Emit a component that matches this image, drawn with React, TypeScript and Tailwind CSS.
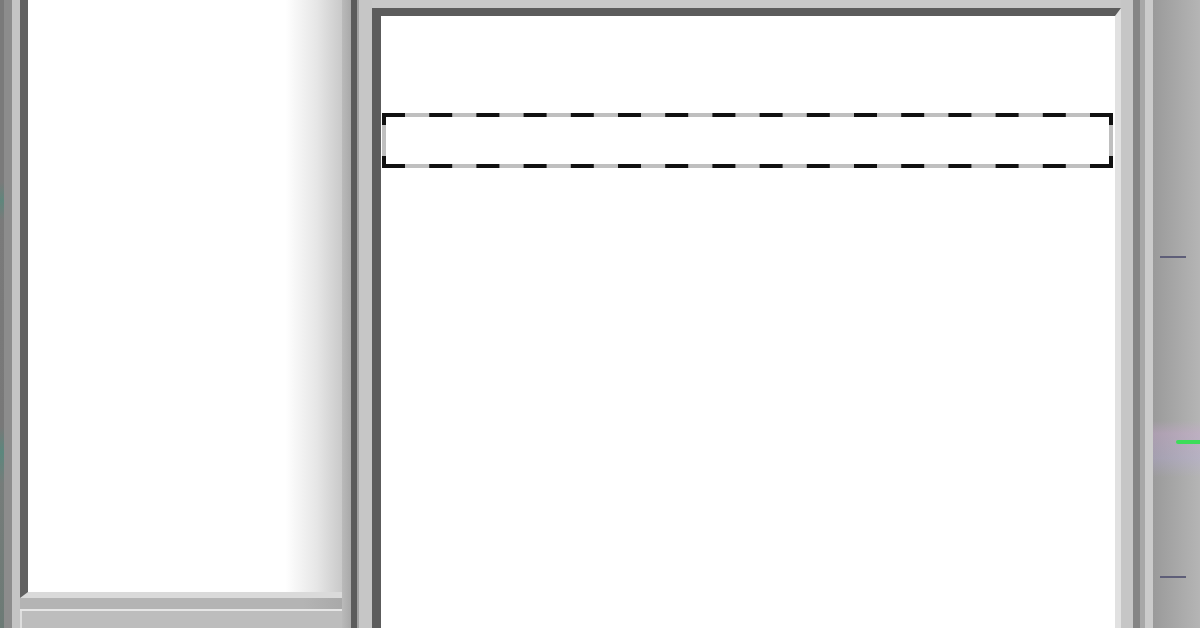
export default function App() {
  return (
    <div className="flex h-[628px] w-[1200px] overflow-hidden bg-[#c4c4c4]">
      {/* outer window edge */}
      <div className="w-[4px] bg-[linear-gradient(to_bottom,#7a7a7a_0%,#7a7a7a_29%,#5f867c_32%,#7a7a7a_35%,#787878_68%,#5b877d_72%,#767c7a_77%,#6c7a75_100%)]" />
      <div className="w-[8px] bg-[#8c8c8c]" />
      <div className="w-[8px] bg-[#c4c4c4]" />

      {/* list pane */}
      <div className="flex w-[322px] flex-col">
        <div className="flex flex-1 border-b-[6px] border-l-[8px] border-b-[#dadada] border-l-[#616161]">
          <div className="flex-1 bg-[linear-gradient(to_right,#ffffff_0%,#ffffff_82%,#e6e6e6_92%,#c9c9c9_100%)]" />
        </div>
        <div className="h-[11px] bg-[linear-gradient(to_right,#b4b4b4_0%,#b4b4b4_88%,#a9a9a9_100%)]" />
        <div className="h-[2px] bg-[#e6e6e6]" />
        <div className="h-[17px] border-l-2 border-l-[#dedede] bg-[#bdbdbd]" />
      </div>

      {/* splitter */}
      <div className="w-[9px] bg-[linear-gradient(to_right,#bababa,#a9a9a9)]" />
      <div className="w-[6px] bg-[#5b5b5b]" />
      <div className="w-[2px] bg-[#a0a0a0]" />
      <div className="w-[13px] bg-[#c6c6c6]" />

      {/* canvas pane */}
      <div className="flex w-[749px] flex-col bg-[#c8c8c8] pt-[8px]">
        <div className="flex-1 border-t-[8px] border-r-[6px] border-l-[9px] border-t-[#5c5c5c] border-r-[#e1e1e1] border-l-[#5c5c5c] bg-white">
          <div className="ml-[1px] mt-[97px] h-[55px] w-[731px]">
            <svg width="731" height="55" viewBox="0 0 731 55" className="block">
              <rect x="2" y="2" width="727" height="51" fill="none" stroke="#bfbfbf" strokeWidth="4" />
              <line x1="0" y1="2" x2="731" y2="2" stroke="#111" strokeWidth="4" strokeDasharray="23 24.2" />
              <line x1="0" y1="53" x2="731" y2="53" stroke="#111" strokeWidth="4" strokeDasharray="23 24.2" />
              <line x1="2" y1="0" x2="2" y2="55" stroke="#111" strokeWidth="4" strokeDasharray="12 31 12" />
              <line x1="729" y1="0" x2="729" y2="55" stroke="#111" strokeWidth="4" strokeDasharray="12 31 12" />
            </svg>
          </div>
        </div>
      </div>

      {/* outer frame */}
      <div className="w-[12px] bg-[#c6c6c6]" />
      <div className="w-[7px] bg-[#858585]" />
      <div className="w-[5px] bg-[#a8a8a8]" />
      <div className="w-[8px] bg-[#cbcbcb]" />

      {/* ruler strip */}
      <div className="flex w-[47px] flex-col bg-[linear-gradient(to_bottom,transparent_67%,rgba(205,165,215,0.35)_69%,rgba(185,170,225,0.3)_73%,transparent_76%),linear-gradient(to_right,#9a9a9a,#b5b5b5)] pt-[256px]">
        <div className="ml-[7px] h-[2px] w-[26px] bg-[#5e5e78]" />
        <div className="ml-auto mt-[182px] h-[4px] w-[24px] rounded-l-full bg-[#3ddc5a]" />
        <div className="ml-[7px] mt-[132px] h-[2px] w-[26px] bg-[#5e5e78]" />
      </div>
    </div>
  );
}
